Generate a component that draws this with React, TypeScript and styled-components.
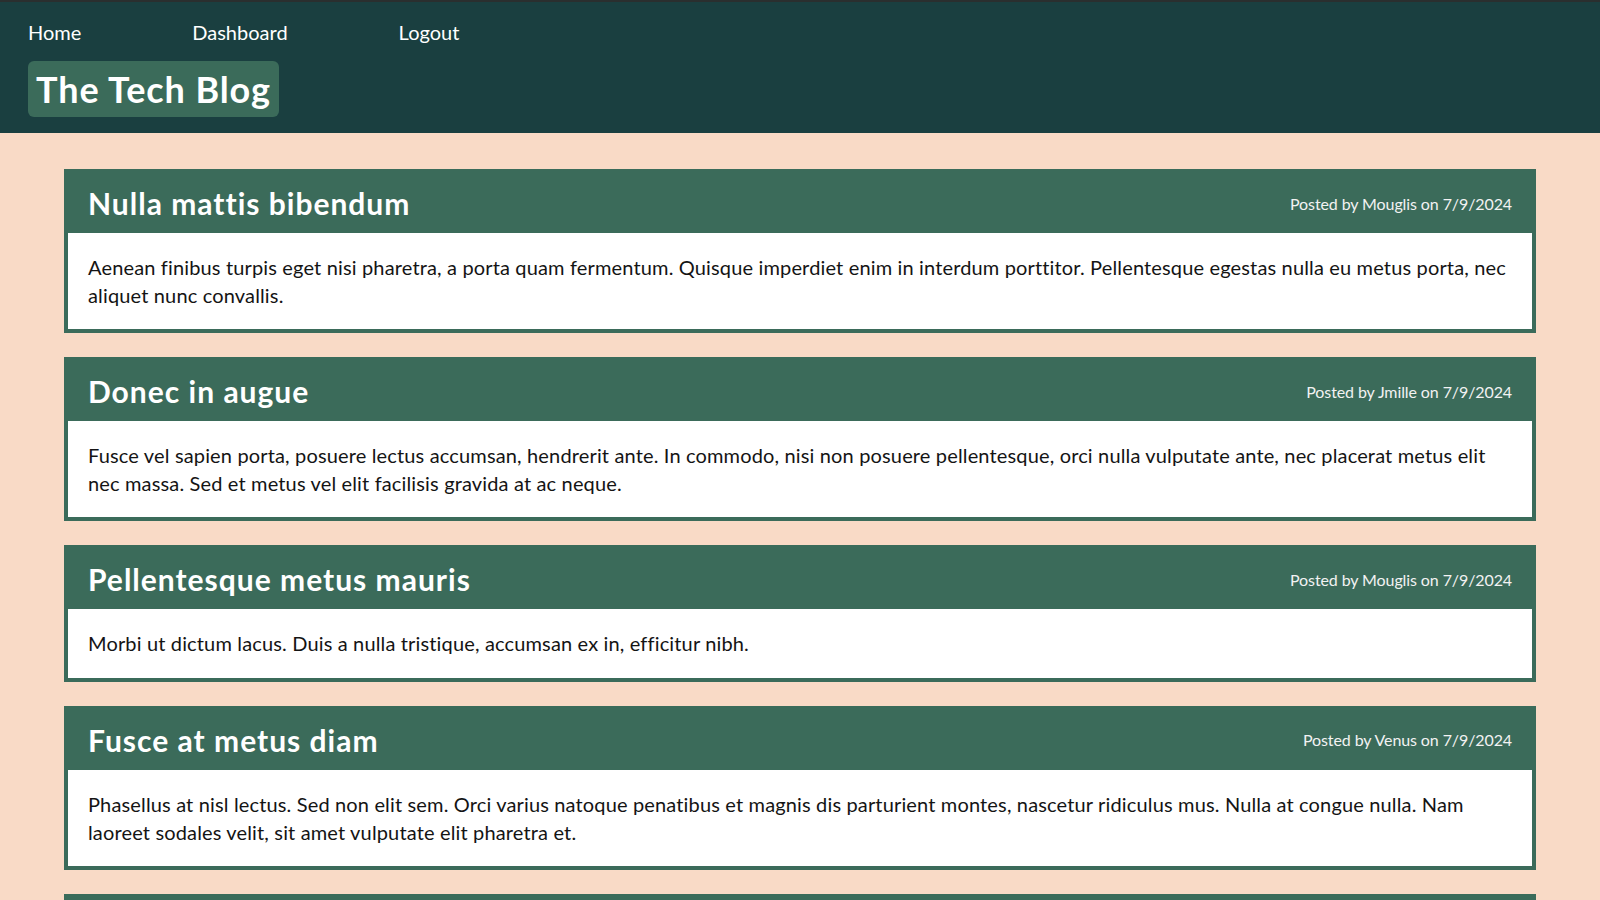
import React from "react";
import styled, { createGlobalStyle } from "styled-components";

const GlobalStyle = createGlobalStyle`
  html, body {
    margin: 0;
    padding: 0;
    background: #f9dac6;
    font-family: Lato, "Open Sans", "Noto Sans", sans-serif;
  }
  * { box-sizing: border-box; }
`;

const Header = styled.header`
  background: #1a3f40;
  border-top: 2px solid #2a2f2f;
  padding: 18px 28px 16px;
  display: flex;
  flex-direction: column;
  align-items: flex-start;
  gap: 17px;
`;

const Nav = styled.nav`
  display: flex;
  gap: 111px;
`;

const NavLink = styled.a`
  color: #ffffff;
  font-size: 20px;
  line-height: 24px;
  text-decoration: none;
  cursor: pointer;
`;

const Brand = styled.h1`
  margin: 0;
  background: #3b6b5a;
  color: #ffffff;
  font-size: 36px;
  font-weight: 700;
  letter-spacing: 0.9px;
  line-height: 43px;
  padding: 7px 8px 6px;
  border-radius: 6px;
`;

const Main = styled.main`
  padding: 36px 64px;
  display: flex;
  flex-direction: column;
  gap: 24px;
`;

const Card = styled.article`
  border: 4px solid #3b6b5a;
  background: #ffffff;
`;

const CardHeader = styled.div`
  background: #3b6b5a;
  height: 60px;
  padding: 0 20px;
  display: flex;
  align-items: center;
  justify-content: space-between;
`;

const CardTitle = styled.h2`
  margin: 0;
  color: #ffffff;
  font-size: 30px;
  font-weight: 700;
  letter-spacing: 1px;
  line-height: 36px;
`;

const Meta = styled.span`
  color: #f2f2f2;
  font-size: 16px;
  letter-spacing: -0.1px;
  line-height: 19px;
`;

const CardBody = styled.p`
  margin: 0;
  padding: 21px 20px 20px;
  color: #141414;
  font-size: 20px;
  letter-spacing: 0.15px;
  line-height: 27.6px;
`;

const posts = [
  {
    title: "Nulla mattis bibendum",
    author: "Mouglis",
    body:
      "Aenean finibus turpis eget nisi pharetra, a porta quam fermentum. Quisque imperdiet enim in interdum porttitor. Pellentesque egestas nulla eu metus porta, nec aliquet nunc convallis.",
  },
  {
    title: "Donec in augue",
    author: "Jmille",
    body:
      "Fusce vel sapien porta, posuere lectus accumsan, hendrerit ante. In commodo, nisi non posuere pellentesque, orci nulla vulputate ante, nec placerat metus elit nec massa. Sed et metus vel elit facilisis gravida at ac neque.",
  },
  {
    title: "Pellentesque metus mauris",
    author: "Mouglis",
    body: "Morbi ut dictum lacus. Duis a nulla tristique, accumsan ex in, efficitur nibh.",
  },
  {
    title: "Fusce at metus diam",
    author: "Venus",
    body:
      "Phasellus at nisl lectus. Sed non elit sem. Orci varius natoque penatibus et magnis dis parturient montes, nascetur ridiculus mus. Nulla at congue nulla. Nam laoreet sodales velit, sit amet vulputate elit pharetra et.",
  },
  {
    title: "Vivamus sed tellus",
    author: "Jmille",
    body: "Curabitur vitae nibh at lorem tincidunt faucibus. Integer non mi at velit luctus pretium.",
  },
];

export default function App() {
  return (
    <>
      <GlobalStyle />
      <Header>
        <Nav>
          <NavLink>Home</NavLink>
          <NavLink>Dashboard</NavLink>
          <NavLink>Logout</NavLink>
        </Nav>
        <Brand>The Tech Blog</Brand>
      </Header>
      <Main>
        {posts.map((p) => (
          <Card key={p.title}>
            <CardHeader>
              <CardTitle>{p.title}</CardTitle>
              <Meta>
                Posted by {p.author} on 7/9/2024
              </Meta>
            </CardHeader>
            <CardBody>{p.body}</CardBody>
          </Card>
        ))}
      </Main>
    </>
  );
}
